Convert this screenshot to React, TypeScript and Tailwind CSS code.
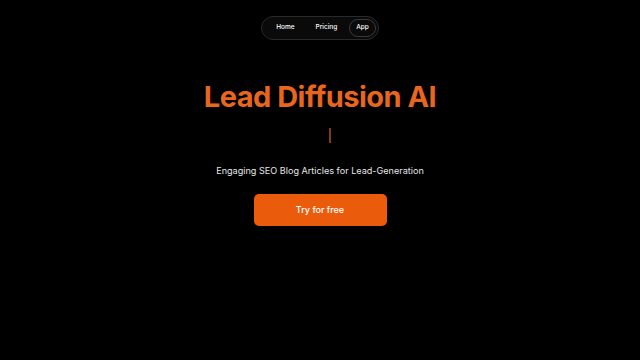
export default function App() {
  return (
    <div
      className="w-[640px] h-[360px] bg-black flex flex-col items-center overflow-hidden"
      style={{ fontFamily: "Inter, 'Noto Sans', sans-serif" }}
    >
      <nav className="mt-[16px] h-[24px] flex items-center rounded-full border border-[#2a2a2a] bg-[#0a0a0a] pl-[14px] pr-[2px]">
        <a className="text-[6.5px] font-medium text-white">Home</a>
        <a className="text-[6.5px] font-medium text-white ml-[21px]">Pricing</a>
        <a className="text-[6.5px] font-medium text-white ml-[12px] h-[18px] px-[6px] flex items-center rounded-full border border-[#3a3a3a]">
          App
        </a>
      </nav>

      <h1 className="mt-[40px] text-[29px] leading-[34px] font-bold tracking-[-0.018em] text-[#e8661d]">
        Lead Diffusion AI
      </h1>

      {/* typing cursor */}
      <div className="mt-[14px] ml-[20px] h-[15px] w-[2px] bg-[#8a3a12]" />

      <p className="mt-[21px] text-[9.1px] text-[#e5e5e5]">
        Engaging SEO Blog Articles for Lead-Generation
      </p>

      <button className="mt-[16px] w-[133px] h-[32px] rounded-[5px] bg-[#ea5c0c] text-white text-[9px] font-medium">
        Try for free
      </button>
    </div>
  );
}
